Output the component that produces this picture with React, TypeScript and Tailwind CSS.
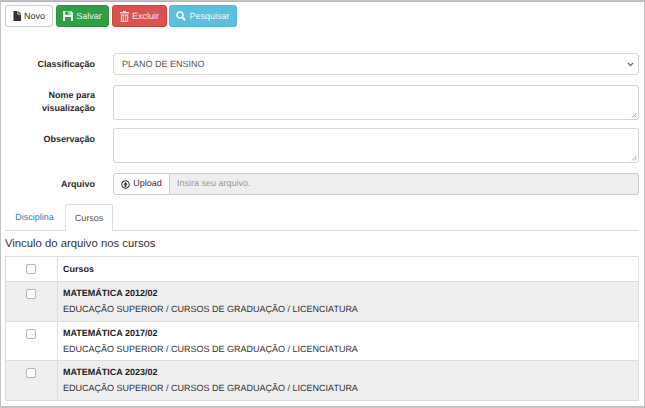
import React from "react";
import { ChevronDown } from "lucide-react";

const font = { fontFamily: '"Liberation Sans", Arial, sans-serif', textRendering: "geometricPrecision" as const };

function Btn({ cls, icon, label }: { cls: string; icon: React.ReactNode; label: string }) {
  return (
    <div className={`h-[22px] flex items-center justify-center gap-[3px] rounded-[3px] border text-[9px] ${cls}`}>
      {icon}
      <span className="pt-[1px]">{label}</span>
    </div>
  );
}

function Label({ children, cls = "" }: { children: React.ReactNode; cls?: string }) {
  return (
    <div className={`w-[90px] shrink-0 text-right font-bold text-[9px] leading-[13px] text-[#2a2a2a] ${cls}`}>{children}</div>
  );
}

function Box() {
  return <span className="block w-[10px] h-[10px] rounded-[2px] border border-[#b4b4b4] bg-white" />;
}

function Row({ title, shaded }: { title: string; shaded: boolean }) {
  return (
    <div className={`flex h-[39.6px] border-b border-[#dddddd] ${shaded ? "bg-[#eeeeee]" : "bg-white"}`}>
      <div className="w-[52px] shrink-0 flex justify-center pt-[7px] pr-[1px] border-r border-[#dddddd]">
        <Box />
      </div>
      <div className="pl-[5px] pt-[5px] text-[9px] leading-[13px] text-[#333]">
        <div className="font-bold text-[#222]">{title}</div>
        <div className="mt-[3px]">EDUCAÇÃO SUPERIOR / CURSOS DE GRADUAÇÃO / LICENCIATURA</div>
      </div>
    </div>
  );
}

function Grip() {
  return (
    <svg className="absolute right-[1px] bottom-[1px]" width="6" height="6" viewBox="0 0 6 6">
      <path d="M5.5 1 L1 5.5 M5.5 3.5 L3.5 5.5" stroke="#888" strokeWidth="0.8" />
    </svg>
  );
}

function FileIcon() {
  return (
    <svg width="8" height="10" viewBox="0 0 8 10">
      <path d="M0.5 0 H4.5 V3.5 H8 V10 H0.5 Z M5.3 0 L8 2.7 H5.3 Z" fill="#333" />
    </svg>
  );
}

function SaveIcon() {
  return (
    <svg width="10" height="10" viewBox="0 0 10 10">
      <path fillRule="evenodd" d="M0 0 H8.2 L10 1.8 V10 H0 Z M2.2 0.6 V3.8 H7.4 V0.6 Z M2 6 V10 H8 V6 Z" fill="#eef8f0" />
      <rect x="5.4" y="1" width="1.3" height="2.2" fill="#eef8f0" />
    </svg>
  );
}

function TrashIcon() {
  return (
    <svg width="9" height="11" viewBox="0 0 9 11">
      <path d="M3 0 H6 V1 H9 V2.6 H0 V1 H3 Z" fill="#f6d5d3" />
      <path fillRule="evenodd" d="M0.8 3.4 H8.2 V11 H0.8 Z M2.2 4.6 V9.8 H3.2 V4.6 Z M4 4.6 V9.8 H5 V4.6 Z M5.8 4.6 V9.8 H6.8 V4.6 Z" fill="#f6d5d3" />
    </svg>
  );
}

function SearchIcon() {
  return (
    <svg width="10" height="10" viewBox="0 0 10 10" fill="none" stroke="#eef9fc">
      <circle cx="4" cy="4" r="3" strokeWidth="1.5" />
      <path d="M6.2 6.2 L9.2 9.2" strokeWidth="2" />
    </svg>
  );
}

export default function App() {
  return (
    <div style={font} className="w-[645px] h-[408px] bg-[#c4c4c4] overflow-hidden">
      <div className="w-[643px] h-[405px] ml-[1px] mt-[1px] bg-white border-t border-[#b4b4bc] flex flex-col px-[4px] pt-[3px]">
        <div className="flex gap-[3px] h-[22px]">
          <Btn cls="w-[48px] bg-white border-[#cccccc] text-[#333]" icon={<FileIcon />} label="Novo" />
          <Btn cls="w-[53px] bg-[#2f9e44] border-[#2a9440] text-[#e8f5ea]" icon={<SaveIcon />} label="Salvar" />
          <Btn cls="w-[55px] bg-[#d9534f] border-[#d43f3a] text-[#fbe9e8]" icon={<TrashIcon />} label="Excluir" />
          <Btn cls="w-[68px] ml-[-1px] bg-[#5bc0de] border-[#46b8da] text-[#eef9fc]" icon={<SearchIcon />} label="Pesquisar" />
        </div>

        <div className="flex items-center mt-[26px]">
          <Label cls="pt-[1px]">Classificação</Label>
          <div className="ml-[18px] w-[526px] h-[22px] border border-[#d8d8d0] rounded-[3px] flex items-center justify-between pl-[8px] pr-[3px] text-[9px] text-[#555]">
            <span className="pt-[2px]">PLANO DE ENSINO</span>
            <ChevronDown size={9} strokeWidth={3} className="text-[#555]" />
          </div>
        </div>

        <div className="flex mt-[10px]">
          <Label cls="pt-[4px]">
            Nome para
            <br />
            visualização
          </Label>
          <div className="relative ml-[18px] w-[526px] h-[35px] border border-[#d4d4d4] rounded-[3px]">
            <Grip />
          </div>
        </div>

        <div className="flex mt-[8px]">
          <Label cls="pt-[5px]">Observação</Label>
          <div className="relative ml-[18px] w-[526px] h-[35px] border border-[#d4d4d4] rounded-[3px]">
            <Grip />
          </div>
        </div>

        <div className="flex items-center mt-[10px]">
          <Label>Arquivo</Label>
          <div className="ml-[18px] w-[526px] h-[22px] flex text-[9px]">
            <div className="w-[57px] shrink-0 flex items-center justify-center gap-[3px] border border-[#cccccc] rounded-l-[3px] text-[#333]">
              <svg width="9" height="9" viewBox="0 0 10 10">
                <circle cx="5" cy="5" r="4.2" fill="none" stroke="#333" strokeWidth="1.2" />
                <path d="M5 2.2 L7.4 5 H6 V7.8 H4 V5 H2.6 Z" fill="#333" />
              </svg>
              <span>Upload</span>
            </div>
            <div className="flex-1 flex items-center pl-[7px] bg-[#eeeeee] border border-l-0 border-[#cccccc] rounded-r-[3px] text-[#999]">
              Insira seu arquivo.
            </div>
          </div>
        </div>

        <div className="flex h-[27px] mt-[9px] w-[634px] border-b border-[#dddddd] text-[9px]">
          <div className="w-[60px] pt-[1px] pr-[1px] flex items-center justify-center text-[#337ab7]">Disciplina</div>
          <div className="w-[48px] h-[27px] pt-[1px] flex items-center justify-center border border-b-0 border-[#dddddd] rounded-t-[3px] bg-white text-[#555]">
            Cursos
          </div>
        </div>

        <div className="mt-[6px] text-[11.3px] leading-[14px] text-[#333]">Vinculo do arquivo nos cursos</div>

        <div className="mt-[5px] w-[634px] border border-b-0 border-[#dddddd]">
          <div className="flex h-[25px] border-b border-[#dddddd] bg-white">
            <div className="w-[52px] shrink-0 flex justify-center items-center pr-[1px] border-r border-[#dddddd]">
              <Box />
            </div>
            <div className="pl-[5px] pt-[2px] flex items-center font-bold text-[9px] text-[#222]">Cursos</div>
          </div>
          <Row title="MATEMÁTICA 2012/02" shaded />
          <Row title="MATEMÁTICA 2017/02" shaded={false} />
          <Row title="MATEMÁTICA 2023/02" shaded />
        </div>
      </div>
    </div>
  );
}
